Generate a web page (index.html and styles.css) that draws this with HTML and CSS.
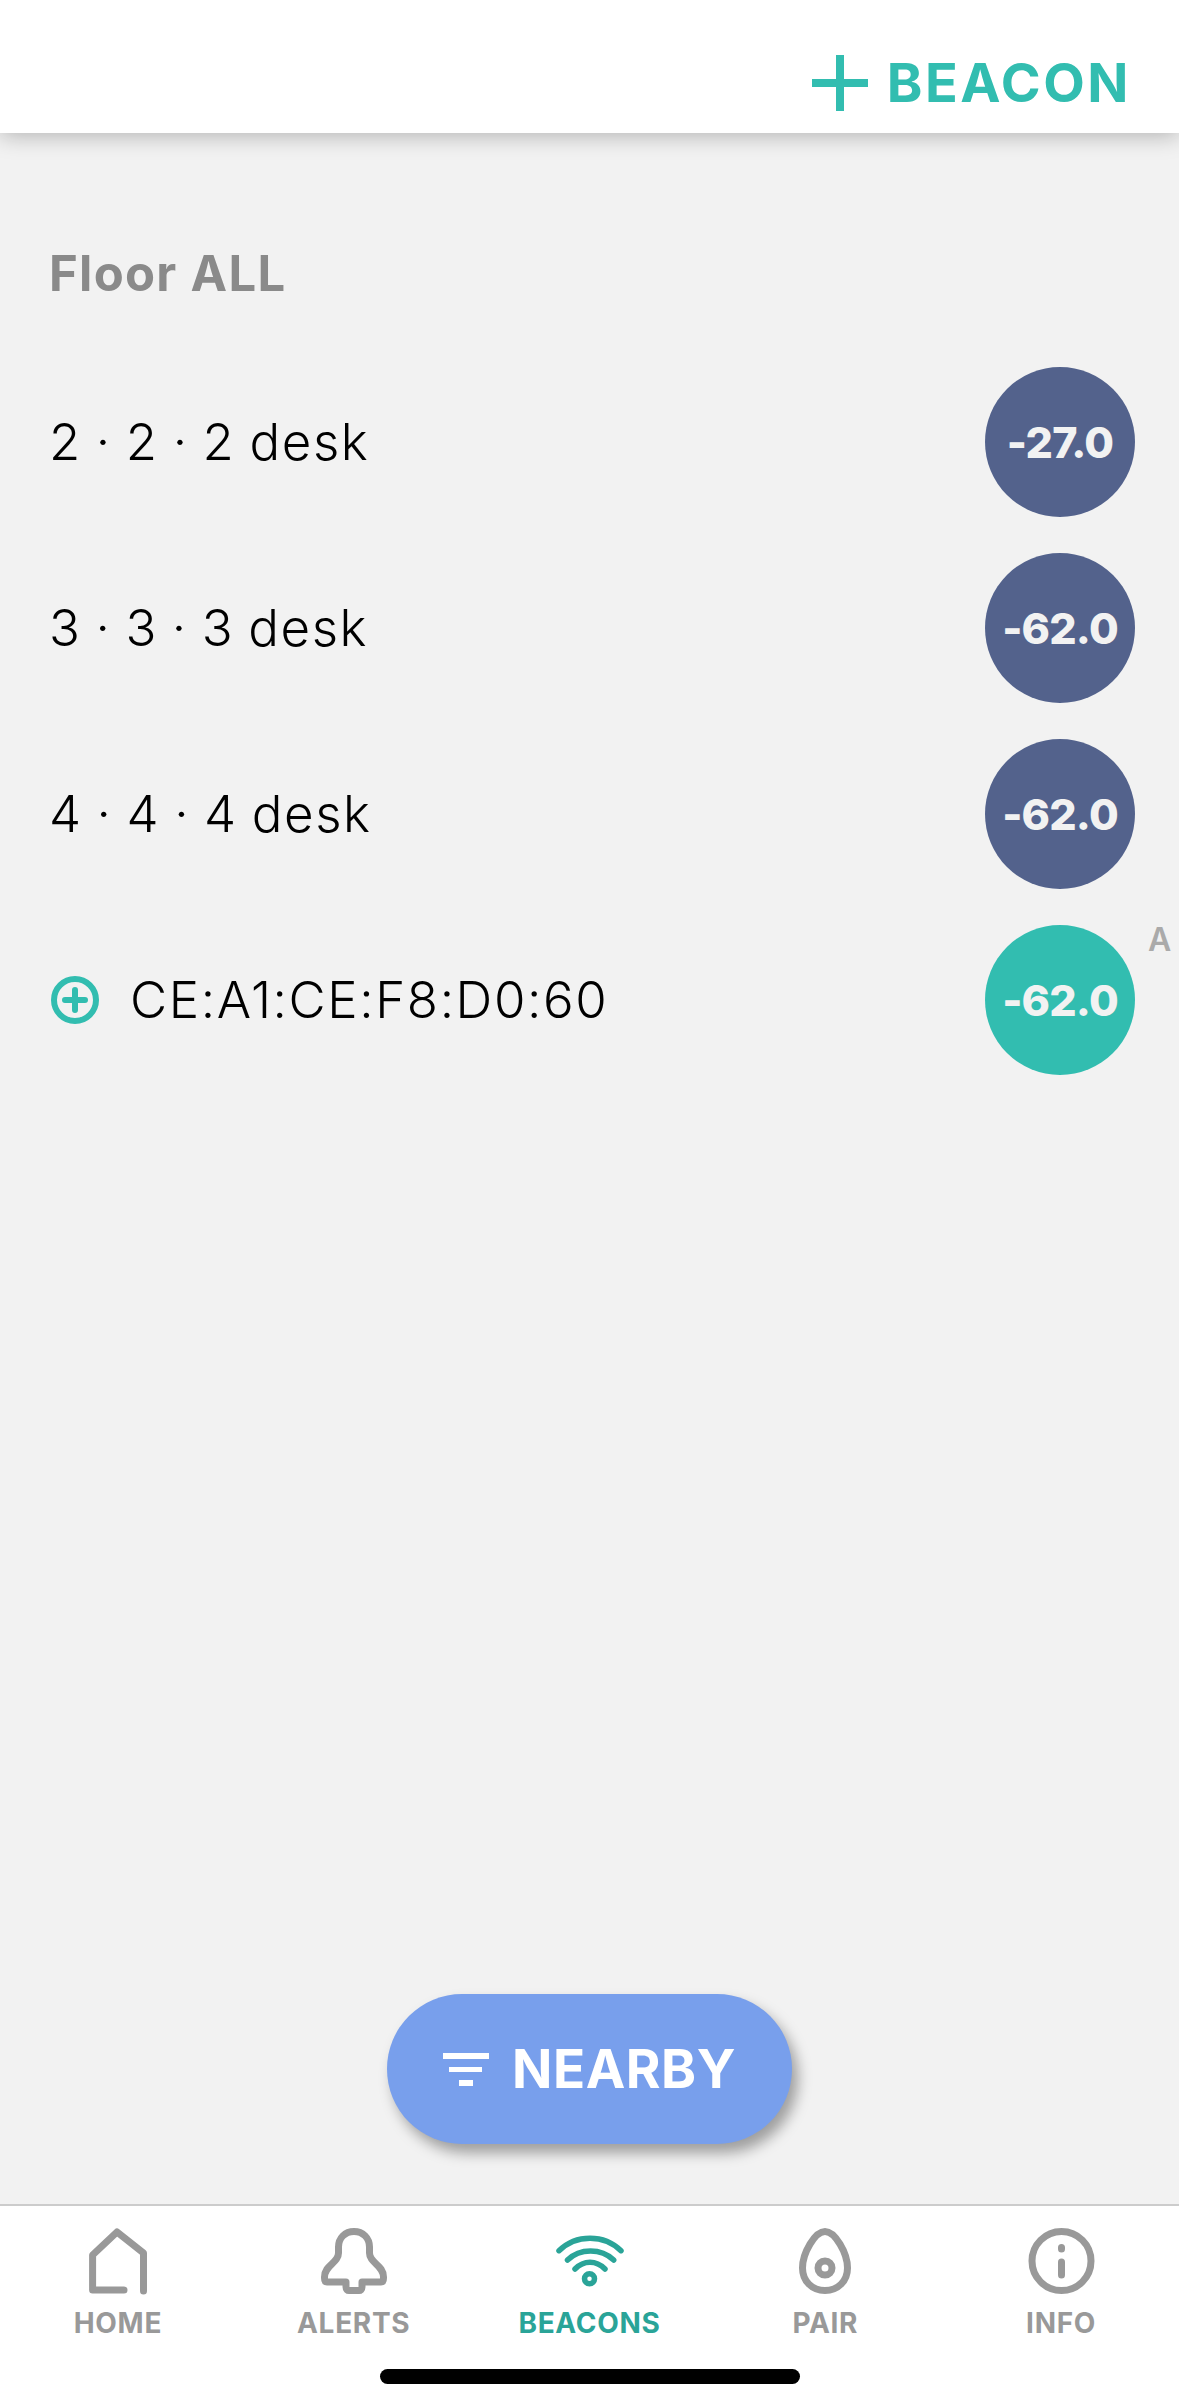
FILE: index.html
```html
<!DOCTYPE html>
<html lang="en">
<head>
    <meta charset="UTF-8">
    <meta name="viewport" content="width=device-width, initial-scale=1.0">
    <title>Beacons</title>
    <link rel="stylesheet" href="styles.css">
</head>
<body>
    <header class="topbar">
        <a href="#" class="add-beacon">
            <svg class="add-icon" viewBox="0 0 56 56"><path d="M24 0h8v24h24v8H32v24h-8V32H0v-8h24z"/></svg>
            <span>BEACON</span>
        </a>
    </header>

    <main class="main-content">
        <h2 class="floor-title">Floor ALL</h2>
        <ul class="beacon-list">
            <li class="beacon-row">
                <span class="beacon-name">2 · 2 · 2 desk</span>
                <span class="signal">-27.0</span>
            </li>
            <li class="beacon-row">
                <span class="beacon-name">3 · 3 · 3 desk</span>
                <span class="signal">-62.0</span>
            </li>
            <li class="beacon-row">
                <span class="beacon-name">4 · 4 · 4 desk</span>
                <span class="signal">-62.0</span>
            </li>
            <li class="beacon-row">
                <svg class="new-icon" viewBox="0 0 48 48"><circle cx="24" cy="24" r="21"/><path d="M24 14v20M14 24h20"/></svg>
                <span class="beacon-name">CE:A1:CE:F8:D0:60</span>
                <span class="signal signal-new">-62.0<b class="signal-tag">A</b></span>
            </li>
        </ul>
        <button class="nearby-btn">
            <svg class="filter-icon" viewBox="0 0 46 33"><path d="M0 0h46v6H0zM6 14h33v5H6zM16 27h14v6H16z"/></svg>
            NEARBY
        </button>
    </main>

    <nav class="tabbar">
        <a href="#" class="tab">
            <svg class="tab-icon" viewBox="0 0 76 76"><path d="M63.5 66V28L37 7 12.6 30v35H44"/></svg>
            HOME
        </a>
        <a href="#" class="tab">
            <svg class="tab-icon" viewBox="0 0 76 76"><path d="M38 6.5C29 6.5 22.5 13 22.5 22v6C22.5 38 8.5 40 8.5 52v1c0 3 1 4 2.500 4H30v5c0 2.500 1.500 3.500 3 3.500h10c1.500 0 3-1 3-3.500v-5h19c1.500 0 2.500-1 2.500-4v-1c0-12-14-14-14-24v-6C53.500 13 47 6.500 38 6.500z"/></svg>
            ALERTS
        </a>
        <a href="#" class="tab active">
            <svg class="tab-icon wifi" viewBox="0 0 76 76"><path d="M8 25.700C25 9 53 9 70 25.700M16.500 35C29 23 50 23 62.700 35M24 44c9-9 21-9 30 0"/><circle cx="38.500" cy="53.700" r="5"/></svg>
            BEACONS
        </a>
        <a href="#" class="tab">
            <svg class="tab-icon" viewBox="0 0 76 76"><path d="M38 6.500C28 6.500 15.500 28 15.500 43 15.500 56 25 65.500 38 65.500S60.500 56 60.500 43C60.500 28 48 6.500 38 6.500z"/><circle cx="38" cy="43" r="7"/></svg>
            PAIR
        </a>
        <a href="#" class="tab">
            <svg class="tab-icon" viewBox="0 0 76 76"><circle cx="38.500" cy="36" r="29.500"/><path d="M38.500 22.500v1.500M38.500 37v13"/></svg>
            INFO
        </a>
    </nav>
    <div class="home-indicator"></div>
</body>
</html>
```

FILE: styles.css
```css
:root {
    --bg-color: #f2f2f2;
    --teal: #32bdb0;
    --teal-dark: #2aa498;
    --navy: #53628c;
    --grey: #999999;
    --font: 'Inter', 'Liberation Sans', sans-serif;
}

* {
    margin: 0;
    padding: 0;
    box-sizing: border-box;
}

body {
    font-family: var(--font);
    background-color: var(--bg-color);
    color: #000;
    display: flex;
    flex-direction: column;
    height: 2408px;
    overflow: hidden;
    position: relative;
}

a {
    text-decoration: none;
}

.topbar {
    height: 133px;
    background-color: #fff;
    box-shadow: 0 2px 22px rgba(0, 0, 0, 0.28);
    display: flex;
    justify-content: flex-end;
    align-items: flex-start;
    padding: 55px 48px 0 0;
    position: relative;
}

.add-beacon {
    display: flex;
    align-items: center;
    gap: 19px;
    height: 55px;
    color: var(--teal);
    font-size: 54px;
    font-weight: 700;
    letter-spacing: 2.5px;
}

.add-icon {
    width: 56px;
    height: 56px;
    fill: var(--teal);
}

.main-content {
    flex-grow: 1;
    position: relative;
    padding: 115px 44px 0 49px;
}

.floor-title {
    font-size: 49px;
    font-weight: 700;
    line-height: 52px;
    letter-spacing: 1.3px;
    color: #8a8a8a;
    margin-bottom: 67px;
}

.beacon-list {
    list-style: none;
    display: flex;
    flex-direction: column;
    gap: 36px;
}

.beacon-row {
    display: flex;
    align-items: center;
    height: 150px;
}

.beacon-name {
    font-size: 51px;
    font-weight: 300;
    flex-grow: 1;
    letter-spacing: 1.6px;
    word-spacing: -2px;
    position: relative;
    top: -1px;
}

.new-icon {
    width: 48px;
    height: 48px;
    margin: 0 31px 0 2px;
    fill: none;
    stroke: var(--teal);
    stroke-width: 6;
    stroke-linecap: round;
}

.signal {
    width: 150px;
    height: 150px;
    border-radius: 50%;
    background-color: var(--navy);
    color: var(--bg-color);
    font-size: 43px;
    font-weight: 800;
    letter-spacing: -0.8px;
    display: flex;
    align-items: center;
    justify-content: center;
    position: relative;
}

.signal-new {
    background-color: var(--teal);
}

.signal-tag {
    position: absolute;
    top: -5px;
    left: 163px;
    font-size: 32px;
    font-weight: 600;
    letter-spacing: 0;
    color: #aaaaaa;
}

.nearby-btn {
    position: absolute;
    left: 387px;
    top: 1861px;
    width: 405px;
    height: 150px;
    border: none;
    border-radius: 75px;
    background-color: #789fec;
    color: #fff;
    font-family: var(--font);
    font-size: 53px;
    font-weight: 700;
    letter-spacing: 0.5px;
    display: flex;
    align-items: center;
    justify-content: center;
    gap: 23px;
    box-shadow: 6px 9px 14px rgba(0, 0, 0, 0.35);
}

.filter-icon {
    width: 46px;
    height: 33px;
    fill: #fff;
}

.tabbar {
    height: 204px;
    flex-shrink: 0;
    background-color: #fff;
    border-top: 2px solid #cccccc;
    display: grid;
    grid-template-columns: repeat(5, 1fr);
    padding-top: 19px;
    position: relative;
}

.tab {
    display: flex;
    flex-direction: column;
    align-items: center;
    height: 120px;
    color: var(--grey);
    font-size: 28px;
    font-weight: 700;
    letter-spacing: 0.7px;
    line-height: 32px;
}

.tab.active {
    color: var(--teal-dark);
}

.tab-icon {
    width: 76px;
    height: 76px;
    margin-bottom: 6px;
    fill: none;
    stroke: currentColor;
    stroke-width: 7;
    stroke-linecap: round;
    stroke-linejoin: round;
}

.tab-icon.wifi {
    stroke-width: 5.5;
}

.home-indicator {
    position: absolute;
    left: 380px;
    top: 2369px;
    width: 420px;
    height: 15px;
    border-radius: 8px;
    background-color: #000;
}
```
